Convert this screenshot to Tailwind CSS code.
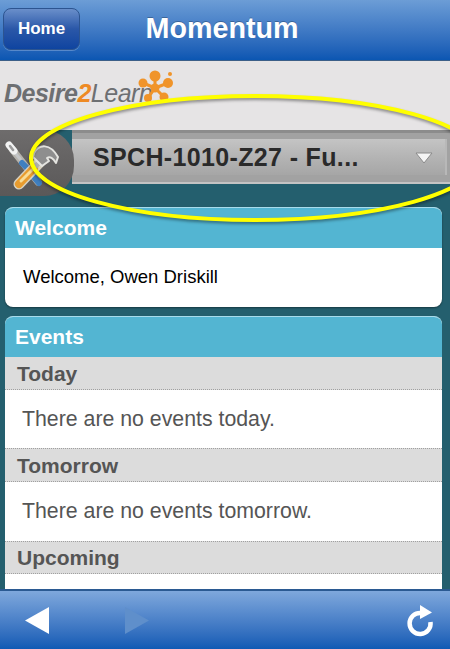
<!DOCTYPE html>
<html lang="en">
<head>
  <meta charset="UTF-8"/>
  <meta name="viewport" content="width=device-width, initial-scale=1.0"/>
  <title>Momentum</title>
  <script src="https://cdn.jsdelivr.net/npm/@tailwindcss/browser@4"></script>
</head>
<body class="m-0 bg-[#245f6e] font-['Liberation_Sans',Arial,sans-serif]">
  <div class="relative w-[450px] h-[649px] overflow-hidden flex flex-col bg-[#245f6e]">

    <!-- Header -->
    <header class="relative h-[61px] shrink-0 flex items-center justify-center bg-gradient-to-b from-[#6c9dd6] to-[#0a56b2] border-b border-[#3c5f88]">
      <button class="absolute left-[3px] top-[8px] w-[77px] h-[42px] rounded-lg border border-[#2c5490] bg-gradient-to-b from-[#6a8fca] via-[#2a57a8] to-[#0e44a0] text-white font-bold text-[17px] shadow-[0_1px_0_rgba(255,255,255,0.25)]">Home</button>
      <h1 class="text-white font-bold text-[28.700px] leading-none -mt-1 -ml-[6px] [text-shadow:0_-1px_0_rgba(0,0,0,0.25)]">Momentum</h1>
    </header>

    <!-- Logo -->
    <div class="h-[69px] shrink-0 bg-[#e6e4e5] relative flex items-end pb-[24px] pl-[4px]">
      <span class="text-[25px] leading-none tracking-[-0.5px] italic font-bold text-[#6d6f72]">Desire<span class="text-[#ee8a24]">2</span><span class="font-normal">Learn</span></span>
      <svg class="absolute left-[136px] top-[9px]" width="40" height="36" viewBox="0 0 40 36" fill="#f0942a">
        <circle cx="19" cy="6" r="5.500"/><circle cx="32" cy="13" r="5"/><circle cx="7" cy="13" r="4.500"/><circle cx="34" cy="4" r="2"/>
        <circle cx="19" cy="18" r="4.500"/><circle cx="12" cy="28" r="4"/><circle cx="28" cy="27" r="4.500"/>
        <path d="M19 6L19 18M32 13L19 18M7 13L19 18M12 28L19 18M28 27L19 18" stroke="#f0942a" stroke-width="3"/>
      </svg>
    </div>

    <!-- Course selector -->
    <div class="relative h-[54px] shrink-0 flex">
      <div class="w-[74px] h-[66px] rounded-r-[30px] bg-gradient-to-b from-[#6e6c6c] to-[#5a5858] shrink-0 z-10">
        <svg width="74" height="66" viewBox="0 0 74 66" fill="none">
          <path d="M12 19L38 52" stroke="#d9d6cc" stroke-opacity="0.7" stroke-width="7" stroke-linecap="round"/>
          <path d="M12 19L24 34" stroke="#c4c6c8" stroke-width="3"/>
          <path d="M9 15L14 21" stroke="#f2f2f2" stroke-width="7" stroke-linecap="round"/>
          <path d="M10 16L13 20" stroke="#9a9a9a" stroke-width="2.500" stroke-linecap="round"/>
          <path d="M22 33L27 38" stroke="#3f7fc0" stroke-width="6" stroke-linecap="round"/>
          <path d="M34 47L39 53" stroke="#3f7fc0" stroke-width="6" stroke-linecap="round"/>
          <path d="M40 32L19 54" stroke="#d8d2c0" stroke-width="11" stroke-linecap="round"/>
          <path d="M34 38L19 54" stroke="#e99c2e" stroke-width="8" stroke-linecap="round"/>
          <path d="M33 39L21 51" stroke="#f9dc96" stroke-width="3" stroke-linecap="round"/>
          <path d="M44 27L35 37" stroke="#b0b0b0" stroke-width="5"/>
          <path d="M34 23C39 14 50 13 58 27L56 33C53 28 50 26 47 28L49 31L42 36L33 27Z" fill="#8e8e8e" stroke="#e4e4e0" stroke-width="2" stroke-linejoin="round"/>
        </svg>
      </div>
      <div class="flex-1 -ml-[2px] bg-[#a2a2a2] border-t-[3px] border-t-[#8c8c8c] border-b-2 border-b-[#c4c4c4] pt-[6px] pb-[7px]">
        <div class="h-full flex items-center justify-between pl-[21px] pr-[12px] bg-gradient-to-b from-[#c4c4c4] via-[#b4b4b4] to-[#a6a6a6] border-r-2 border-r-[#b8b8b8] mr-[3px]">
          <span class="font-bold text-[25px] leading-none text-[#2a2a2a] tracking-[0.35px]">SPCH-1010-Z27 - Fu...</span>
          <svg width="18" height="13" viewBox="0 0 18 13"><path d="M1 2H17L9 12Z" fill="#f4f4f4" stroke="#8a8a8a"/></svg>
        </div>
      </div>
    </div>

    <!-- Content -->
    <main class="flex-1 min-h-0 overflow-hidden pl-[5px] pt-[23px] pr-[8px] flex flex-col gap-[9px]">
      <section class="shrink-0 rounded-lg overflow-hidden bg-white border-t border-[#a8dcec] shadow-[0_1px_2px_rgba(0,0,0,0.4)]">
        <h2 class="h-[40px] bg-[#53b5d2] text-white font-bold text-[21px] leading-[40px] px-[10px]">Welcome</h2>
        <p class="h-[59px] pl-[18px] leading-[58px] text-[18.500px] text-black">Welcome, Owen Driskill</p>
      </section>

      <section class="shrink-0 rounded-t-lg overflow-hidden bg-white border-t border-[#a8dcec]">
        <h2 class="h-[40px] bg-[#53b5d2] text-white font-bold text-[21px] leading-[40px] px-[10px]">Events</h2>
        <h3 class="h-[33px] bg-[#dcdcdc] border-b border-dotted border-[#a0a0a0] text-[#555] font-bold text-[21px] leading-[34px] px-[12px]">Today</h3>
        <p class="h-[58px] pl-[17px] leading-[58px] text-[21.300px] text-[#555]">There are no events today.</p>
        <h3 class="h-[34px] bg-[#dcdcdc] border-y border-dotted border-[#a0a0a0] text-[#555] font-bold text-[21px] leading-[33px] px-[12px]">Tomorrow</h3>
        <p class="h-[59px] pl-[17px] leading-[58px] text-[21.300px] text-[#555]">There are no events tomorrow.</p>
        <h3 class="h-[33px] bg-[#dcdcdc] border-y border-dotted border-[#a0a0a0] text-[#555] font-bold text-[21px] leading-[32px] px-[12px]">Upcoming</h3>
        <p class="h-[30px]"></p>
      </section>
    </main>

    <!-- Footer toolbar -->
    <footer class="h-[60px] shrink-0 flex items-center justify-between bg-gradient-to-b from-[#7fa8dc] to-[#0f5ab4] border-t-2 border-[#2b5a92] pl-[25px] pr-[16px]">
      <div class="flex items-center gap-[76px]">
        <svg width="24" height="27" viewBox="0 0 24 27"><path d="M24 0V27L0 13.5Z" fill="#fff"/></svg>
        <svg width="24" height="27" viewBox="0 0 24 27"><path d="M0 0V27L24 13.5Z" fill="#5f8fcb"/></svg>
      </div>
      <svg width="28" height="33" viewBox="0 0 28 33" fill="none">
        <path d="M15 9A10.500 10.500 0 1 0 24.500 18" stroke="#fff" stroke-width="4.500"/>
        <path d="M14 1L26 8.500L14 15Z" fill="#fff"/>
      </svg>
    </footer>

    <!-- Yellow annotation drawn over the screenshot -->
    <svg class="absolute left-0 top-0 z-20 pointer-events-none" width="450" height="649" viewBox="0 0 450 649" fill="none">
      <ellipse class="blur-[1.500px]" cx="255" cy="160" rx="224" ry="62" stroke="#000" stroke-opacity="0.4" stroke-width="4"/>
      <ellipse cx="255" cy="158" rx="224" ry="62" stroke="#ffff00" stroke-width="4"/>
    </svg>
  </div>
</body>
</html>
